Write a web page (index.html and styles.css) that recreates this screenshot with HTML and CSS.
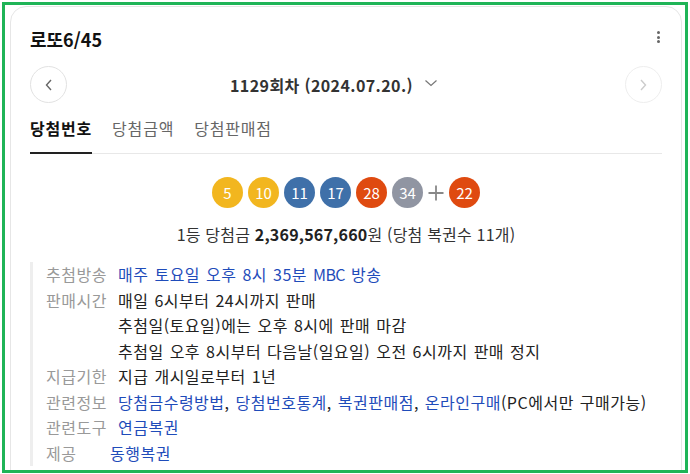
FILE: index.html
```html
<!DOCTYPE html>
<html lang="ko">
<head>
<meta charset="utf-8">
<link rel="stylesheet" href="styles.css">
</head>
<body>
<div class="frame">
  <div class="card">
    <div class="head">
      <h2 class="title">로또6/45</h2>
      <span class="kebab"><i></i><i></i><i></i></span>
    </div>
    <div class="nav">
      <button class="circ prev"><svg width="12" height="14" viewBox="0 0 12 14"><path d="M8 2 L3.5 7 L8 12" fill="none" stroke="#666" stroke-width="1.4"/></svg></button>
      <div class="round">1129회차 (2024.07.20.) <svg class="down" width="14" height="10" viewBox="0 0 14 10"><path d="M1.5 2.5 L7 7.5 L12.5 2.5" fill="none" stroke="#777" stroke-width="1.2"/></svg></div>
      <button class="circ next"><svg width="12" height="14" viewBox="0 0 12 14"><path d="M4 2 L8.5 7 L4 12" fill="none" stroke="#ccc" stroke-width="1.4"/></svg></button>
    </div>
    <div class="tabs">
      <span class="tab on">당첨번호</span>
      <span class="tab">당첨금액</span>
      <span class="tab">당첨판매점</span>
    </div>
    <div class="balls">
      <span class="ball y">5</span>
      <span class="ball y">10</span>
      <span class="ball b">11</span>
      <span class="ball b">17</span>
      <span class="ball r">28</span>
      <span class="ball g">34</span>
      <svg class="plus" width="16" height="16" viewBox="0 0 16 16"><path d="M8 0.5 V15.5 M0.5 8 H15.5" stroke="#888" stroke-width="1.8"/></svg>
      <span class="ball r">22</span>
    </div>
    <p class="prize">1등 당첨금 <b>2,369,567,660</b>원 (당첨 복권수 11개)</p>
    <dl class="info">
      <div class="row"><dt>추첨방송</dt><dd class="link">매주 토요일 오후 8시 35분 <span class="latin">MBC</span> 방송</dd></div>
      <div class="row"><dt>판매시간</dt><dd>매일 6시부터 24시까지 판매<br>추첨일(토요일)에는 오후 8시에 판매 마감<br>추첨일 오후 8시부터 다음날(일요일) 오전 6시까지 판매 정지</dd></div>
      <div class="row"><dt>지급기한</dt><dd>지급 개시일로부터 1년</dd></div>
      <div class="row"><dt>관련정보</dt><dd><a>당첨금수령방법</a>, <a>당첨번호통계</a>, <a>복권판매점</a>, <a>온라인구매</a>(PC에서만 구매가능)</dd></div>
      <div class="row"><dt>관련도구</dt><dd><a>연금복권</a></dd></div>
      <div class="row"><dt class="short">제공</dt><dd><a>동행복권</a></dd></div>
    </dl>
  </div>
</div>
</body>
</html>
```
FILE: styles.css
```css
* { box-sizing: border-box; }
html, body { margin: 0; padding: 0; background: #fff; }
body { font-family: "Noto Sans CJK KR", "Noto Sans", sans-serif; color: #222; }
.frame {
  margin: 2px;
  width: 686px;
  height: 471px;
  border: 3px solid #1fb457;
  overflow: hidden;
  padding: 1px 0 0 5px;
}
.card {
  width: 672px;
  border: 1px solid #e6e6e6;
  border-radius: 16px;
  padding: 20px 19px 20px 19px;
  height: 520px;
}
.head { display: flex; justify-content: space-between; align-items: flex-start; height: 24px; }
.title { margin: 0; font-size: 18px; font-weight: 700; line-height: 24px; color: #111; }
.kebab { display: flex; flex-direction: column; gap: 1.5px; margin: 4px 2px 0 0; }
.kebab i { display: block; width: 3px; height: 3px; border-radius: 50%; background: #666; }
.nav { display: flex; align-items: center; justify-content: space-between; margin-top: 15px; }
.circ {
  width: 37px; height: 37px; border-radius: 50%; border: 1px solid #e2e2e2; background: #fff;
  display: flex; align-items: center; justify-content: center; padding: 0;
}
.circ.next { border-color: #eee; }
.round {
  font-size: 16px; font-weight: 700; color: #333; letter-spacing: 0.4px;
  display: flex; align-items: center; gap: 11px; margin-right: 24px;
}
.down { margin-top: -3px; }
.tabs { display: flex; gap: 20px; margin-top: 8px; border-bottom: 1px solid #e8e8e8; }
.tab {
  font-size: 16px; letter-spacing: 0.8px; line-height: 22px; padding: 6px 0 13px; color: #666;
  border-bottom: 2px solid transparent; margin-bottom: -1px;
}
.tab.on { color: #111; font-weight: 700; border-bottom-color: #222; }
.balls { display: flex; justify-content: center; align-items: center; gap: 5px; margin-top: 23px; }
.ball {
  width: 31px; height: 31px; border-radius: 50%; color: #fff; font-size: 15px;
  display: flex; align-items: center; justify-content: center;
}
.ball.y { background: #f2b61f; }
.ball.b { background: #3f70a9; }
.ball.r { background: #df4a10; }
.ball.g { background: #9095a2; }
.plus { display: block; }
.prize { text-align: center; font-size: 16px; letter-spacing: 0.2px; color: #333; margin: 15px 0 0; line-height: 22px; }
.prize b { color: #222; }
.info {
  margin: 17px 0 0 0; border-left: 3px solid #eee; padding: 0 0 0 13px;
  font-size: 16px; letter-spacing: 0.5px; word-spacing: 1px; line-height: 25.5px;
}
.latin { letter-spacing: -0.6px; }
.row { display: flex; }
dt { color: #999; width: 72px; flex: none; }
dt.short { width: 64px; }
dd { margin: 0; color: #222; }
dd.link, dd a { color: #1f4cba; }
```
